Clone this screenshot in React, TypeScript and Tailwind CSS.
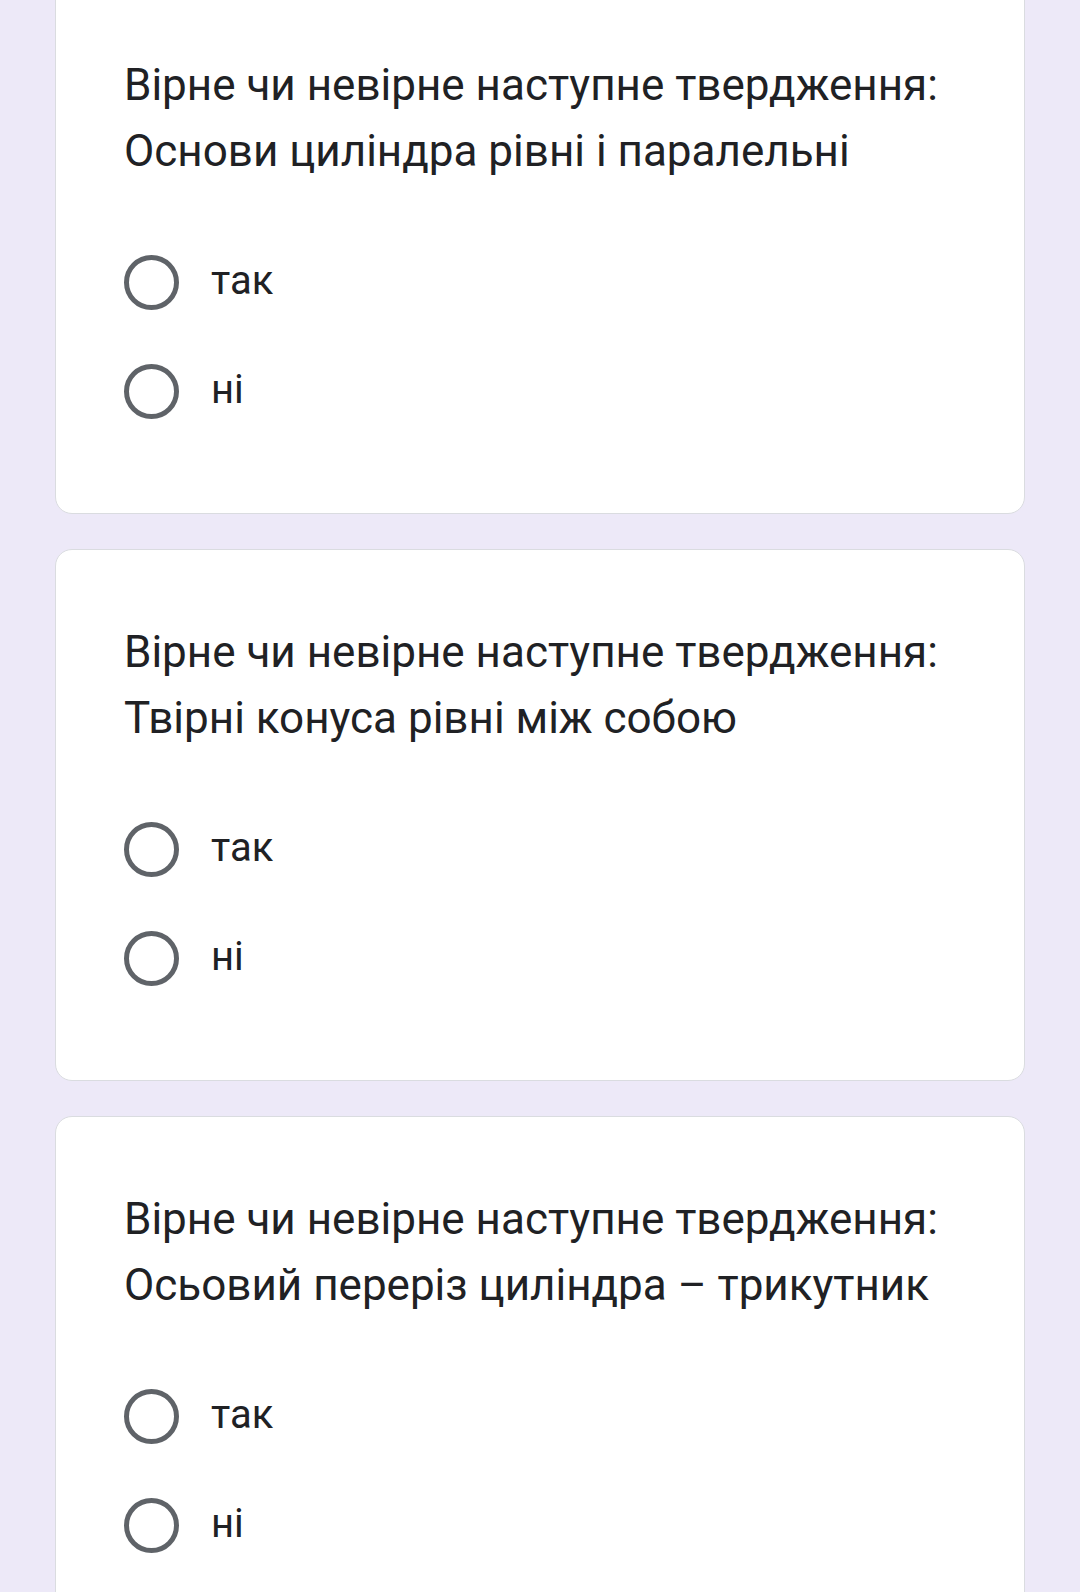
const QUESTIONS = [
  { id: 'q1', title: 'Вірне чи невірне наступне твердження:', sub: 'Основи циліндра рівні і паралельні' },
  { id: 'q2', title: 'Вірне чи невірне наступне твердження:', sub: 'Твірні конуса рівні між собою' },
  { id: 'q3', title: 'Вірне чи невірне наступне твердження:', sub: 'Осьовий переріз циліндра – трикутник' },
]

const OPTIONS = ['так', 'ні']

function Question({ title, sub }: { title: string; sub: string }) {
  return (
    <div className="bg-white border border-[#dadce0] rounded-[17px] pl-[68px] pr-[40px] pt-[69px] pb-[67px]">
      <p className="text-[44px] leading-[66px] text-[#202124]">
        {title}
        <br />
        {sub}
      </p>
      <div className="mt-[44px] flex flex-col">
        {OPTIONS.map((opt) => (
          <label key={opt} className="h-[109px] flex items-center gap-[32px] cursor-pointer">
            <span className="w-[55px] h-[55px] rounded-full border-[5px] border-[#5f6368] flex-shrink-0" />
            <span className="text-[40px] text-[#202124] leading-none -mt-[4px]">{opt}</span>
          </label>
        ))}
      </div>
    </div>
  )
}

export default function App() {
  return (
    <div
      className="min-h-[1592px] bg-[#ede9f8] px-[55px] overflow-hidden"
      style={{ fontFamily: 'Roboto, "Noto Sans", sans-serif' }}
    >
      <div className="-mt-[18px] flex flex-col gap-[35px]">
        {QUESTIONS.map((q) => (
          <Question key={q.id} title={q.title} sub={q.sub} />
        ))}
      </div>
    </div>
  )
}
